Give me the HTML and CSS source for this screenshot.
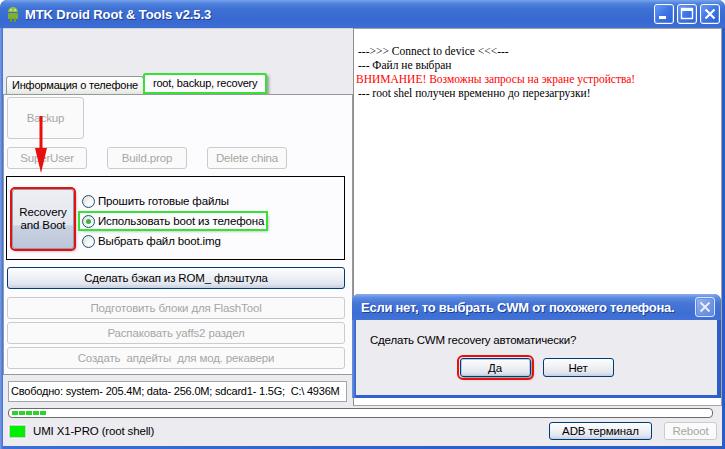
FILE: index.html
```html
<!DOCTYPE html>
<html lang="ru">
<head>
    <meta charset="UTF-8">
    <title>MTK Droid Root &amp; Tools v2.5.3</title>
    <link rel="stylesheet" href="styles.css">
</head>
<body>
    <div class="window">
        <div class="titlebar">
            <svg class="app-icon" width="12" height="16" viewBox="0 0 12 16">
                <path d="M1 6 A5 5 0 0 1 11 6 Z" fill="#8fc23a"/>
                <rect x="1" y="7" width="10" height="6" rx="1" fill="#7fb12c"/>
                <rect x="3" y="12" width="2" height="4" fill="#6f9e25"/>
                <rect x="7" y="12" width="2" height="4" fill="#6f9e25"/>
                <circle cx="4" cy="4" r="0.8" fill="#fff"/>
                <circle cx="8" cy="4" r="0.8" fill="#fff"/>
            </svg>
            <span class="title">MTK Droid Root &amp; Tools v2.5.3</span>
            <div class="caption-buttons">
                <div class="cap-btn">
                    <svg width="18" height="18" viewBox="0 0 18 18"><rect x="4" y="11" width="7" height="3" fill="#fff"/></svg>
                </div>
                <div class="cap-btn">
                    <svg width="18" height="18" viewBox="0 0 18 18"><path d="M3.5 3.5h11v10h-11z" fill="none" stroke="#fff" stroke-width="1.4"/><rect x="3" y="3" width="12" height="3" fill="#fff"/></svg>
                </div>
                <div class="cap-btn">
                    <svg width="18" height="18" viewBox="0 0 18 18"><path d="M4.5 4.5l9 9M13.5 4.5l-9 9" stroke="#fff" stroke-width="2.2"/></svg>
                </div>
            </div>
        </div>

        <div class="client">
            <div class="main">
                <div class="left">
                    <div class="tabs">
                        <div class="tab">Информация о телефоне</div>
                        <div class="tab active">root, backup, recovery</div>
                    </div>
                    <div class="panel">
                        <div class="btn disabled big">Backup</div>
                        <div class="btn-row">
                            <div class="btn disabled small">SuperUser</div>
                            <div class="btn disabled small">Build.prop</div>
                            <div class="btn disabled small">Delete china</div>
                        </div>
                        <div class="groupbox">
                            <div class="btn recovery mark-red">Recovery<br>and Boot</div>
                            <div class="radios">
                                <div class="radio-row"><span class="radio-item"><span class="radio"></span>Прошить готовые файлы</span></div>
                                <div class="radio-row"><span class="radio-item mark-green"><span class="radio checked"></span>Использовать boot из телефона</span></div>
                                <div class="radio-row"><span class="radio-item"><span class="radio"></span>Выбрать файл boot.img</span></div>
                            </div>
                        </div>
                        <div class="btn wide first">Сделать бэкап из ROM_ флэштула</div>
                        <div class="btn disabled wide gap8">Подготовить блоки для FlashTool</div>
                        <div class="btn disabled wide gap3">Распаковать yaffs2 раздел</div>
                        <div class="btn disabled wide gap3">Создать&nbsp; апдейты&nbsp; для мод. рекавери</div>
                    </div>
                    <div class="freebox">Свободно: system- 205.4M; data- 256.0M; sdcard1- 1.5G;&nbsp; C:\ 4936M</div>
                </div>
                <div class="log">
                    <div class="log-line">---&gt;&gt;&gt; Connect to device &lt;&lt;&lt;---</div>
                    <div class="log-line">--- Файл не выбран</div>
                    <div class="log-line warn">ВНИМАНИЕ! Возможны запросы на экране устройства!</div>
                    <div class="log-line">--- root shel получен временно до перезагрузки!</div>
                </div>
            </div>

            <div class="progress">
                <span class="seg"></span><span class="seg"></span><span class="seg"></span><span class="seg"></span><span class="seg"></span>
            </div>

            <div class="statusrow">
                <span class="led"></span>
                <span class="device">UMI X1-PRO (root shell)</span>
                <div class="btn adb">ADB терминал</div>
                <div class="btn disabled reboot">Reboot</div>
            </div>
        </div>

        <div class="dialog">
            <div class="dialog-title">
                <span class="title">Если нет, то выбрать CWM от похожего телефона.</span>
                <div class="cap-btn inactive">
                    <svg width="18" height="18" viewBox="0 0 18 18"><path d="M4.5 4.5l9 9M13.5 4.5l-9 9" stroke="#e8eefb" stroke-width="2"/></svg>
                </div>
            </div>
            <div class="dialog-body">
                <p class="question">Сделать CWM recovery автоматически?</p>
                <div class="dialog-buttons">
                    <div class="btn dlg mark-red focus">Да</div>
                    <div class="btn dlg">Нет</div>
                </div>
            </div>
        </div>

        <svg class="arrow" width="16" height="60" viewBox="0 0 16 60">
            <rect x="6.5" y="0" width="3" height="40" fill="#e8100c"/>
            <polygon points="2,32 14,32 8,57" fill="#e8100c"/>
        </svg>
    </div>
</body>
</html>
```

FILE: styles.css
```css
* {
    margin: 0;
    padding: 0;
    box-sizing: border-box;
}

body {
    width: 725px;
    height: 449px;
    overflow: hidden;
    font-family: "Liberation Sans", Arial, sans-serif;
    font-size: 11px;
    letter-spacing: -0.15px;
    color: #000;
    background: #fff;
}

.window {
    position: relative;
    width: 725px;
    height: 449px;
    display: flex;
    flex-direction: column;
    background: linear-gradient(90deg, #7c9ee3 0, #3d6fd6 3px, #2f62cc 50%, #2a5cc6 100%);
    border-radius: 7px 7px 0 0;
}

/* title bar */

.titlebar {
    height: 28px;
    display: flex;
    align-items: center;
    padding: 0 5px 0 7px;
    border-radius: 7px 7px 0 0;
    background: linear-gradient(#7aa4ec 0%, #5083dc 12%, #3f72d4 30%, #3868d0 70%, #3d6ed3 100%);
}

.app-icon {
    flex-shrink: 0;
}

.title {
    margin-left: 6px;
    color: #fff;
    font-weight: bold;
    font-size: 13px;
    letter-spacing: -0.1px;
    text-shadow: 1px 1px 0 #1c3f9a;
}

.caption-buttons {
    margin-left: auto;
    display: flex;
    gap: 3px;
}

.cap-btn {
    width: 20px;
    height: 20px;
    border: 1px solid #fff;
    border-radius: 3px;
    display: flex;
    align-items: center;
    justify-content: center;
    background: linear-gradient(135deg, #6c9cf5 0%, #3f77e6 45%, #2c5fd6 100%);
    box-shadow: inset 0 0 0 1px #5b8cec;
}

.cap-btn.inactive {
    background: linear-gradient(135deg, #9bb8f0 0%, #7899e2 50%, #6486d8 100%);
    border-color: #dde6f8;
}

/* client area */

.client {
    flex: 1;
    margin: 0 3px 3px 3px;
    background: #ecebf0;
    display: flex;
    flex-direction: column;
}

.main {
    display: flex;
    height: 378px;
}

.left {
    width: 350px;
    display: flex;
    flex-direction: column;
    border-top: 1px solid #d5d4da;
}

.tabs {
    display: flex;
    align-items: flex-end;
    height: 65px;
    padding-left: 3px;
}

.tab {
    height: 18px;
    line-height: 17px;
    padding: 0 5px;
    border: 1px solid #919b9c;
    border-bottom: none;
    border-radius: 3px 3px 0 0;
    font-size: 11px;
    letter-spacing: -0.2px;
    background: linear-gradient(#ffffff, #f3f3f0 70%, #e5e5e0);
}

.tab.active {
    height: 21px;
    line-height: 19px;
    padding: 0 9px;
    margin-left: -1px;
    background: #fcfcfe;
    outline: 2px solid #35e335;
    outline-offset: -2px;
    box-shadow: 2px 2px 3px rgba(0, 0, 0, 0.35);
}

.panel {
    height: 281px;
    border: 1px solid #919b9c;
    background: #fcfcfe;
    padding: 2px 3px;
}

/* buttons */

.btn {
    display: flex;
    align-items: center;
    justify-content: center;
    text-align: center;
    border: 1px solid #003c74;
    border-radius: 3px;
    background: linear-gradient(#fdfdfe 0%, #f0f1f5 45%, #e1e5ee 80%, #c6cfdf 100%);
    white-space: nowrap;
    font-size: 11.5px;
}

.btn.disabled {
    border-color: #cbcbcb;
    background: #fafafa;
    color: #a6a6a6;
}

.btn.big {
    width: 77px;
    height: 42px;
}

.btn-row {
    display: flex;
    gap: 20px;
    margin-top: 8px;
}

.btn.small {
    width: 80px;
    height: 22px;
}

.groupbox {
    display: flex;
    margin: 7px 0 0 -1px;
    height: 84px;
    width: 339px;
    border: 1px solid #000;
    padding: 12px 0 0 5px;
}

.btn.recovery {
    width: 62px;
    height: 60px;
    line-height: 13px;
    border-color: #8e9cb4;
    background: linear-gradient(#eceef3 0%, #e4e7ee 60%, #c9d2e1 62%, #bcc7d9 100%);
}

.mark-red {
    outline: 2px solid #e8100c;
    box-shadow: 2px 2px 3px rgba(0, 0, 0, 0.35);
}

.mark-green {
    outline: 2px solid #35e335;
    box-shadow: 2px 2px 3px rgba(0, 0, 0, 0.35);
}

.radios {
    margin: 2px 0 0 6px;
    font-size: 11.5px;
}

.radio-row {
    height: 20px;
    display: flex;
    align-items: center;
}

.radio-item {
    display: flex;
    align-items: center;
    height: 16px;
    padding: 0 2px 0 2px;
}

.radio {
    width: 13px;
    height: 13px;
    margin-right: 3px;
    border: 1px solid #1c5180;
    border-radius: 50%;
    background: radial-gradient(circle at 65% 65%, #ffffff 0%, #f0f0ea 50%, #d9d9d2 100%);
    display: flex;
    align-items: center;
    justify-content: center;
}

.radio.checked::after {
    content: "";
    width: 5px;
    height: 5px;
    border-radius: 50%;
    background: #3cb43c;
}

.btn.wide {
    width: 338px;
    height: 22px;
}

.btn.first {
    margin-top: 7px;
}

.btn.gap8 {
    margin-top: 8px;
}

.btn.gap3 {
    margin-top: 3px;
}

.freebox {
    margin: 6px 0 0 5px;
    width: 339px;
    height: 21px;
    line-height: 19px;
    padding-left: 2px;
    border: 1px solid #a0a4ab;
    background: #fff;
    font-size: 11px;
    letter-spacing: -0.2px;
    white-space: nowrap;
    overflow: hidden;
}

/* log */

.log {
    flex: 1;
    border: 1px solid #a3a3a3;
    border-left-color: #8e8e8e;
    background: #fff;
    padding: 15px 0 0 4px;
    font-family: "Liberation Serif", "Times New Roman", serif;
    font-size: 11.5px;
    letter-spacing: 0;
    line-height: 14px;
}

.log-line.warn {
    color: #f00;
    margin-left: -2px;
}

/* progress + status */

.progress {
    display: flex;
    gap: 1px;
    margin: 2px 0 0 5px;
    width: 705px;
    height: 10px;
    padding: 2px 3px;
    border: 1px solid #6b6b6b;
    border-radius: 4px;
    background: #fff;
}

.seg {
    width: 6px;
    height: 4px;
    background: #2bd42b;
}

.statusrow {
    display: flex;
    align-items: center;
    height: 26px;
    padding: 0 5px 0 5px;
    font-size: 11.5px;
}

.led {
    width: 19px;
    height: 15px;
    border: 1px solid #f4f4f4;
    box-shadow: inset 0 0 0 1px #cfcfcf;
    background: #00f000;
}

.device {
    margin-left: 6px;
}

.btn.adb {
    margin-left: auto;
    width: 103px;
    height: 18px;
}

.btn.reboot {
    margin-left: 12px;
    width: 53px;
    height: 18px;
}

/* dialog */

.dialog {
    position: absolute;
    left: 352px;
    top: 294px;
    width: 369px;
    height: 104px;
    display: flex;
    flex-direction: column;
    border-radius: 7px 7px 0 0;
    background: linear-gradient(90deg, #6f93e0 0, #2f62cc 4px, #2f62cc 98%, #2a5cc6 100%);
}

.dialog-title {
    height: 26px;
    display: flex;
    align-items: center;
    padding: 0 6px 0 3px;
    border-radius: 7px 7px 0 0;
    background: linear-gradient(#8aaff0 0%, #5d8ae0 14%, #4676d6 35%, #3d6ed3 75%, #4272d5 100%);
}

.dialog-title .title {
    margin-left: 6px;
    letter-spacing: -0.25px;
}

.dialog-title .cap-btn {
    margin-left: auto;
}

.dialog-body {
    flex: 1;
    margin: 0 4px 3px 4px;
    background: #ecebf0;
    padding: 13px 0 0 14px;
}

.question {
    line-height: 14px;
    font-size: 11.5px;
    letter-spacing: -0.2px;
}

.dialog-buttons {
    display: flex;
    justify-content: center;
    gap: 12px;
    margin: 11px 0 0 -14px;
}

.btn.dlg {
    width: 71px;
    height: 19px;
}

.btn.focus {
    outline-offset: 1px;
    box-shadow: inset 0 0 0 1px #b8c8e8, 2px 2px 3px rgba(0, 0, 0, 0.35);
}

.arrow {
    position: absolute;
    left: 33px;
    top: 116px;
}
```
